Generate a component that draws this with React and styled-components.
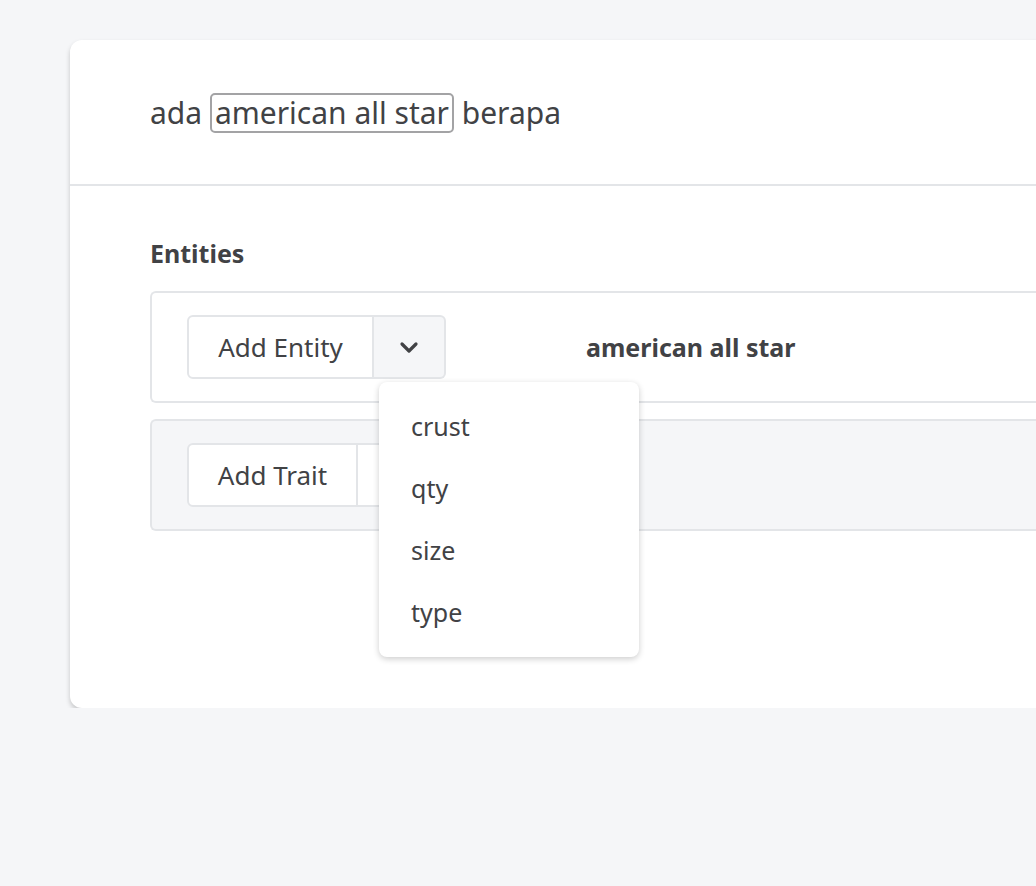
import React, { useState } from 'react';
import styled, { createGlobalStyle } from 'styled-components';

const GlobalStyle = createGlobalStyle`
  html, body {
    margin: 0;
    padding: 0;
    background: #f5f6f8;
    overflow: hidden;
    font-family: "Noto Sans", Lato, sans-serif;
    color: #414245;
  }
`;

const traits = ['crust', 'qty', 'size', 'type'];

const App = () => {
  const [open] = useState(true);

  return (
    <Page>
      <GlobalStyle />
      <Card>
        <Header>
          <Sentence>
            ada <Highlight>american all star</Highlight> berapa
          </Sentence>
        </Header>

        <Body>
          <SectionTitle>Entities</SectionTitle>

          <EntityRow>
            <ButtonGroup>
              <MainButton>Add Entity</MainButton>
              <CaretButton tinted>
                <svg width="22" height="14" viewBox="0 0 22 14">
                  <polyline
                    points="4,4 11,11 18,4"
                    fill="none"
                    stroke="#414245"
                    strokeWidth="3.2"
                    strokeLinecap="round"
                    strokeLinejoin="round"
                  />
                </svg>
              </CaretButton>
              {open && (
                <Menu>
                  {traits.map(t => (
                    <MenuItem key={t}>{t}</MenuItem>
                  ))}
                </Menu>
              )}
            </ButtonGroup>
            <EntityName>american all star</EntityName>
          </EntityRow>

          <TraitRow>
            <ButtonGroup>
              <MainButton narrow>Add Trait</MainButton>
              <CaretButton />
            </ButtonGroup>
          </TraitRow>
        </Body>
      </Card>
    </Page>
  );
};

const Page = styled.div`
  padding: 40px 0 0 70px;
  width: 1200px;
`;

const Card = styled.div`
  width: 1100px;
  background: #fff;
  border-radius: 12px;
  box-shadow: 0 3px 5px rgba(0, 0, 0, 0.2);
`;

const Header = styled.div`
  display: flex;
  align-items: center;
  height: 144px;
  padding-left: 80px;
  border-bottom: 2px solid #e3e5e8;
`;

const Sentence = styled.div`
  font-size: 30px;
  color: #414245;
`;

const Highlight = styled.span`
  display: inline-block;
  padding: 0 3px 1px;
  border: 2px solid #a3a3a5;
  border-radius: 5px;
  line-height: 35px;
`;

const Body = styled.div`
  padding: 52px 0 177px 80px;
`;

const SectionTitle = styled.h2`
  margin: 0 0 23px;
  font-size: 25px;
  font-weight: 700;
  line-height: 30px;
  color: #414245;
`;

const EntityRow = styled.div`
  display: flex;
  align-items: center;
  gap: 140px;
  height: 108px;
  padding-left: 35px;
  border: 2px solid #e3e5e8;
  border-right: none;
  border-radius: 6px 0 0 6px;
  background: #fff;
`;

const TraitRow = styled(EntityRow)`
  margin-top: 16px;
  background: #f5f6f8;
`;

const ButtonGroup = styled.div`
  position: relative;
  display: flex;
  height: 64px;
`;

const MainButton = styled.div`
  display: flex;
  align-items: center;
  justify-content: center;
  width: ${props => (props.narrow ? '171px' : '187px')};
  border: 2px solid #e3e5e8;
  border-radius: 6px 0 0 6px;
  background: #fff;
  font-size: 26px;
  color: #414245;
  box-sizing: border-box;
  cursor: pointer;
`;

const CaretButton = styled.div`
  display: flex;
  align-items: center;
  justify-content: center;
  width: 72px;
  border: 2px solid #e3e5e8;
  border-left: none;
  border-radius: 0 6px 6px 0;
  background: ${props => (props.tinted ? '#f5f6f8' : '#fff')};
  box-sizing: border-box;
  cursor: pointer;
`;

const EntityName = styled.div`
  font-size: 25px;
  font-weight: 700;
  color: #414245;
`;

const Menu = styled.div`
  position: absolute;
  top: 67px;
  left: 192px;
  z-index: 2;
  width: 260px;
  padding: 13px 0 14px;
  background: #fff;
  border-radius: 8px;
  box-shadow: 0 2px 6px rgba(0, 0, 0, 0.2);
`;

const MenuItem = styled.div`
  display: flex;
  align-items: center;
  height: 62px;
  padding-left: 32px;
  font-size: 25px;
  color: #414245;
  cursor: pointer;
`;

export default App;
